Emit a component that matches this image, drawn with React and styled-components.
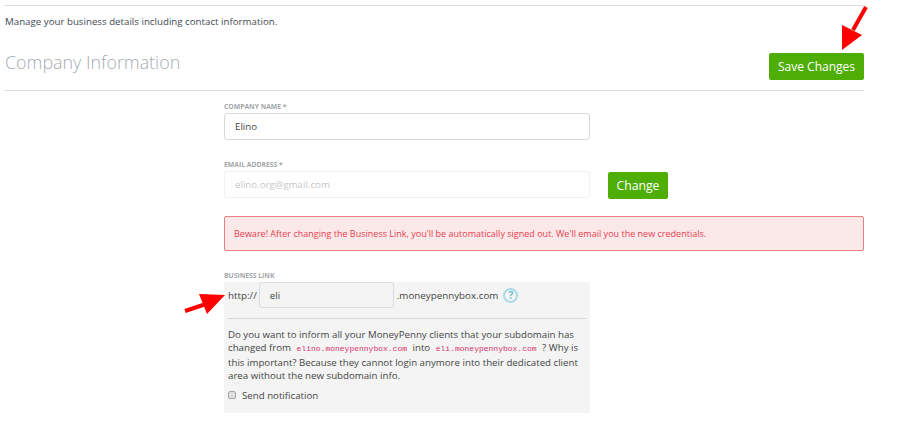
import React from "react";
import styled, { createGlobalStyle } from "styled-components";

const Global = createGlobalStyle`
  html, body { margin: 0; padding: 0; background: #fff; }
  body { font-family: "Open Sans", "Liberation Sans", sans-serif; color: #444; }
  * { box-sizing: border-box; }
`;
const Page = styled.div`
  position: relative;
  width: 913px;
  height: 423px;
  overflow: hidden;
  padding: 5px 0 0 4px;
`;
const Content = styled.div`
  width: 860px;
  border-top: 1px solid #ddd;
`;
const Intro = styled.p`
  margin: 9px 0 0 1px;
  font-size: 9.73px;
  line-height: 13px;
  color: #3f4a54;
`;
const HeaderRow = styled.div`
  display: flex;
  justify-content: space-between;
  align-items: flex-start;
  height: 63px;
  padding-top: 22px;
  border-bottom: 1px solid #ddd;
`;
const Title = styled.h1`
  margin: 0 0 0 1px;
  font-size: 17.9px;
  line-height: 24px;
  font-weight: 300;
  color: #a5acb4;
`;
const GreenButton = styled.button`
  border: 0;
  border-radius: 2px;
  background: #4fae06;
  color: #fff;
  font-family: inherit;
  font-size: ${p => p.$size}px;
  height: 27px;
  width: ${p => p.$w}px;
  padding: 0;
`;
const SaveButton = styled(GreenButton)`
  margin-top: 3px;
`;
const ChangeButton = styled(GreenButton)`
  margin-top: 3px;
`;
const Form = styled.div`
  margin-left: 220px;
  padding-top: 11px;
`;
const Label = styled.div`
  font-size: 6.8px;
  line-height: 9px;
  font-weight: 700;
  color: #a3a6a8;
  text-transform: uppercase;
`;
const TextBox = styled.div`
  display: flex;
  align-items: center;
  width: ${p => p.$w}px;
  height: 27px;
  padding-left: 10px;
  margin-top: 2px;
  border: 1px solid ${p => p.$light ? "#f1f1f1" : "#d9d9d9"};
  border-radius: 3px;
  background: ${p => p.$fill || "#fff"};
  font-size: 9.7px;
  color: ${p => p.$light ? "#c4c7c9" : "#444"};
`;
const FieldGap = styled.div`
  margin-top: 20px;
`;
const EmailRow = styled.div`
  display: flex;
  align-items: flex-start;
  gap: 18px;
  height: 29px;
`;
const Alert = styled.div`
  display: flex;
  align-items: center;
  height: 35px;
  margin-top: 18px;
  padding-left: 9px;
  border: 1px solid #eb7f85;
  border-radius: 2px;
  background: #fbe9ea;
  color: #e7404f;
  font-size: 9.03px;
`;
const LinkLabel = styled(Label)`
  margin-top: 20px;
`;
const LinkPanel = styled.div`
  width: 366px;
  height: 131px;
  margin-top: 2px;
  padding: 0 4px;
  background: #f4f4f4;
  border-radius: 2px;
  font-size: 9.8px;
  color: #444;
`;
const LinkRow = styled.div`
  display: flex;
  align-items: center;
  height: 26px;
`;
const SubBox = styled(TextBox)`
  height: 26px;
  margin: 0 3px 0 2px;
  border-color: #dcdcdc;
`;
const Help = styled.span`
  display: inline-flex;
  align-items: center;
  justify-content: center;
  width: 15px;
  height: 15px;
  margin-left: 5px;
  border: 2px solid #a5dae6;
  border-radius: 50%;
  color: #6cc0d4;
  font-size: 10px;
  font-weight: 700;
`;
const PanelRule = styled.hr`
  margin: 10px 0 9px;
  border: 0;
  border-top: 1px solid #d8d8d8;
`;
const Notice = styled.p`
  margin: 0;
  font-size: 9.7px;
  line-height: 13.4px;
  color: #444;
`;
const Code = styled.code`
  font-family: "Liberation Mono", monospace;
  font-size: 8px;
  color: #d6336c;
  padding: 0 3px;
`;
const CheckRow = styled.label`
  display: flex;
  align-items: center;
  gap: 6px;
  margin-top: 6px;
  font-size: 9.7px;
`;
const Check = styled.span`
  width: 8px;
  height: 8px;
  border: 1px solid #a8a8a8;
  border-radius: 2px;
  background: #dedede;
`;
const Arrow = styled.svg`
  position: absolute;
  left: ${p => p.$x}px;
  top: ${p => p.$y}px;
`;

export default function App() {
  return (
    <>
      <Global />
      <Page>
        <Content>
          <Intro>Manage your business details including contact information.</Intro>
          <HeaderRow>
            <Title>Company Information</Title>
            <SaveButton $size={12} $w={95}>Save Changes</SaveButton>
          </HeaderRow>
          <Form>
            <Label>Company Name *</Label>
            <TextBox $w={366}>Elino</TextBox>
            <FieldGap>
              <Label>Email Address *</Label>
              <EmailRow>
                <TextBox $w={366} $light>elino.org@gmail.com</TextBox>
                <ChangeButton $size={12.2} $w={60}>Change</ChangeButton>
              </EmailRow>
            </FieldGap>
            <Alert>Beware! After changing the Business Link, you'll be automatically signed out. We'll email you the new credentials.</Alert>
            <LinkLabel>Business Link</LinkLabel>
            <LinkPanel>
              <LinkRow>
                http://
                <SubBox $w={135} $fill="#f4f4f4">eli</SubBox>
                .moneypennybox.com
                <Help>?</Help>
              </LinkRow>
              <PanelRule />
              <Notice>
                Do you want to inform all your MoneyPenny clients that your subdomain has changed from <Code>elino.moneypennybox.com</Code> into <Code>eli.moneypennybox.com</Code> ? Why is this important? Because they cannot login anymore into their dedicated client area without the new subdomain info.
              </Notice>
              <CheckRow><Check />Send notification</CheckRow>
            </LinkPanel>
          </Form>
        </Content>
        <Arrow $x={838} $y={4} width="30" height="48" viewBox="0 0 30 48">
          <path d="M28 3 L15 26" stroke="#f00" strokeWidth="4" fill="none" />
          <polygon points="4,46 4,21 24,31" fill="#f00" />
        </Arrow>
        <Arrow $x={182} $y={292} width="44" height="24" viewBox="0 0 44 24">
          <path d="M3 19 L24 12" stroke="#f00" strokeWidth="4" fill="none" />
          <polygon points="43,3 17,2 25,22" fill="#f00" />
        </Arrow>
      </Page>
    </>
  );
}
